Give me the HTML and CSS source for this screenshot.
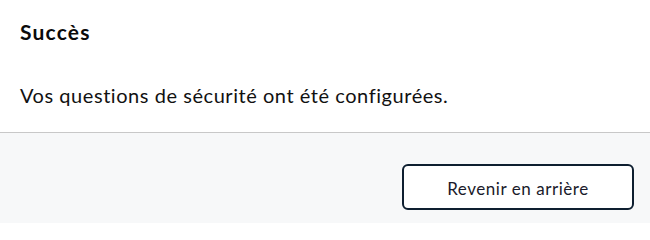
FILE: index.html
```html
<!DOCTYPE html>
<html lang="fr">
<head>
<meta charset="utf-8">
<link rel="stylesheet" href="styles.css">
</head>
<body>
<div class="modal">
  <div class="modal-body">
    <h2 class="title">Succès</h2>
    <p class="message">Vos questions de sécurité ont été configurées.</p>
  </div>
  <div class="modal-footer">
    <button class="btn-back" type="button">Revenir en arrière</button>
  </div>
</div>
</body>
</html>
```

FILE: styles.css
```css
html, body {
  margin: 0;
  padding: 0;
  background: #ffffff;
}
body {
  font-family: Lato, "Noto Sans", sans-serif;
  color: #0d1b2a;
}
.modal {
  width: 650px;
  height: 223px;
  display: flex;
  flex-direction: column;
}
.modal-body {
  padding: 18px 20px 0 20px;
  height: 114px;
  border-bottom: 1px solid #c8c8c8;
}
.title {
  margin: 0;
  font-size: 21px;
  font-weight: 700;
  line-height: 28px;
  letter-spacing: 1.2px;
  color: #0b0b0b;
}
.message {
  margin: 36px 0 0 0;
  font-size: 20px;
  line-height: 26px;
  letter-spacing: 0.55px;
  color: #111;
}
.modal-footer {
  flex: 1;
  background: #f7f8f9;
  display: flex;
  justify-content: flex-end;
  align-items: flex-start;
  padding: 31px 16px 0 0;
}
.btn-back {
  width: 232px;
  height: 46px;
  border: 2px solid #0e1f30;
  border-radius: 6px;
  background: #ffffff;
  font-family: Lato, "Noto Sans", sans-serif;
  font-size: 17px;
  letter-spacing: 0.55px;
  color: #1a1a2a;
  padding: 2px 0 0 0;
  cursor: pointer;
}
```
